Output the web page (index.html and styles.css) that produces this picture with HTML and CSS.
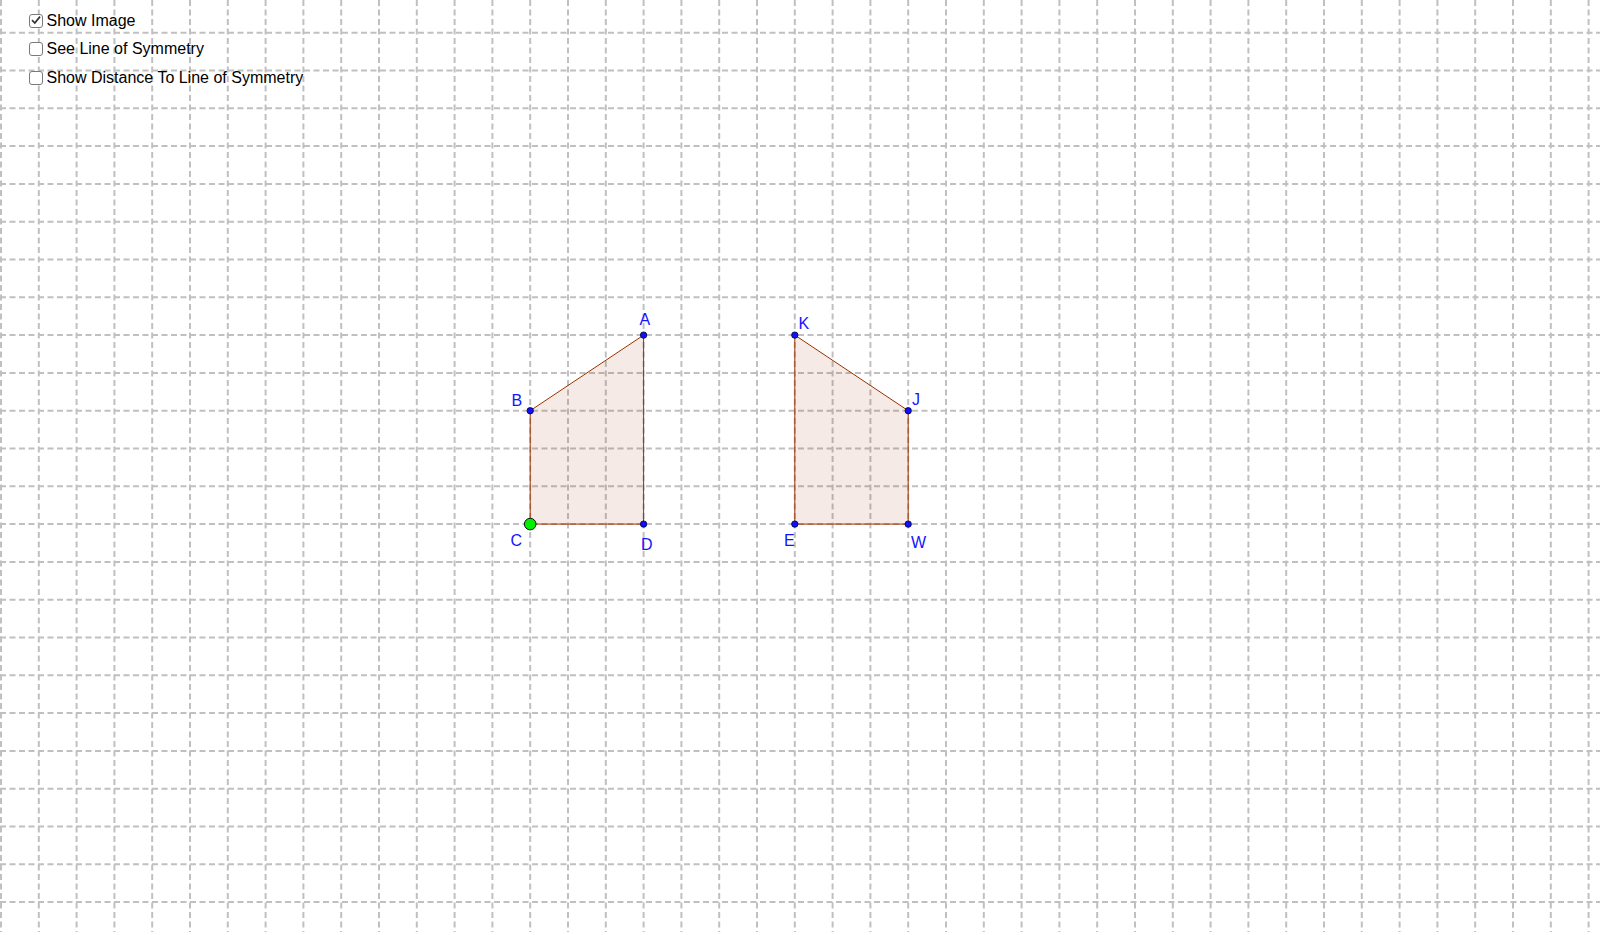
FILE: index.html
```html
<!DOCTYPE html>
<html lang="en">
<head>
<meta charset="utf-8">
<title>Line of Symmetry</title>
<link rel="stylesheet" href="styles.css">
</head>
<body>
<div class="stage">
  <svg class="canvas" width="1600" height="932" viewBox="0 0 1600 932" xmlns="http://www.w3.org/2000/svg">
    <g class="grid">
      <line x1="1" y1="0" x2="1" y2="932"/>
      <line x1="38.8" y1="0" x2="38.8" y2="932"/>
      <line x1="76.6" y1="0" x2="76.6" y2="932"/>
      <line x1="114.4" y1="0" x2="114.4" y2="932"/>
      <line x1="152.2" y1="0" x2="152.2" y2="932"/>
      <line x1="190" y1="0" x2="190" y2="932"/>
      <line x1="227.8" y1="0" x2="227.8" y2="932"/>
      <line x1="265.6" y1="0" x2="265.6" y2="932"/>
      <line x1="303.4" y1="0" x2="303.4" y2="932"/>
      <line x1="341.2" y1="0" x2="341.2" y2="932"/>
      <line x1="379" y1="0" x2="379" y2="932"/>
      <line x1="416.8" y1="0" x2="416.8" y2="932"/>
      <line x1="454.6" y1="0" x2="454.6" y2="932"/>
      <line x1="492.4" y1="0" x2="492.4" y2="932"/>
      <line x1="530.2" y1="0" x2="530.2" y2="932"/>
      <line x1="568" y1="0" x2="568" y2="932"/>
      <line x1="605.8" y1="0" x2="605.8" y2="932"/>
      <line x1="643.6" y1="0" x2="643.6" y2="932"/>
      <line x1="681.4" y1="0" x2="681.4" y2="932"/>
      <line x1="719.2" y1="0" x2="719.2" y2="932"/>
      <line x1="757" y1="0" x2="757" y2="932"/>
      <line x1="794.8" y1="0" x2="794.8" y2="932"/>
      <line x1="832.6" y1="0" x2="832.6" y2="932"/>
      <line x1="870.4" y1="0" x2="870.4" y2="932"/>
      <line x1="908.2" y1="0" x2="908.2" y2="932"/>
      <line x1="946" y1="0" x2="946" y2="932"/>
      <line x1="983.8" y1="0" x2="983.8" y2="932"/>
      <line x1="1021.6" y1="0" x2="1021.6" y2="932"/>
      <line x1="1059.4" y1="0" x2="1059.4" y2="932"/>
      <line x1="1097.2" y1="0" x2="1097.2" y2="932"/>
      <line x1="1135" y1="0" x2="1135" y2="932"/>
      <line x1="1172.8" y1="0" x2="1172.8" y2="932"/>
      <line x1="1210.6" y1="0" x2="1210.6" y2="932"/>
      <line x1="1248.4" y1="0" x2="1248.4" y2="932"/>
      <line x1="1286.2" y1="0" x2="1286.2" y2="932"/>
      <line x1="1324" y1="0" x2="1324" y2="932"/>
      <line x1="1361.8" y1="0" x2="1361.8" y2="932"/>
      <line x1="1399.6" y1="0" x2="1399.6" y2="932"/>
      <line x1="1437.4" y1="0" x2="1437.4" y2="932"/>
      <line x1="1475.2" y1="0" x2="1475.2" y2="932"/>
      <line x1="1513" y1="0" x2="1513" y2="932"/>
      <line x1="1550.8" y1="0" x2="1550.8" y2="932"/>
      <line x1="1588.6" y1="0" x2="1588.6" y2="932"/>
      <line x1="0" y1="32.7" x2="1600" y2="32.7"/>
      <line x1="0" y1="70.5" x2="1600" y2="70.5"/>
      <line x1="0" y1="108.3" x2="1600" y2="108.3"/>
      <line x1="0" y1="146.1" x2="1600" y2="146.1"/>
      <line x1="0" y1="183.9" x2="1600" y2="183.9"/>
      <line x1="0" y1="221.7" x2="1600" y2="221.7"/>
      <line x1="0" y1="259.5" x2="1600" y2="259.5"/>
      <line x1="0" y1="297.3" x2="1600" y2="297.3"/>
      <line x1="0" y1="335.1" x2="1600" y2="335.1"/>
      <line x1="0" y1="372.9" x2="1600" y2="372.9"/>
      <line x1="0" y1="410.7" x2="1600" y2="410.7"/>
      <line x1="0" y1="448.5" x2="1600" y2="448.5"/>
      <line x1="0" y1="486.3" x2="1600" y2="486.3"/>
      <line x1="0" y1="524.1" x2="1600" y2="524.1"/>
      <line x1="0" y1="561.9" x2="1600" y2="561.9"/>
      <line x1="0" y1="599.7" x2="1600" y2="599.7"/>
      <line x1="0" y1="637.5" x2="1600" y2="637.5"/>
      <line x1="0" y1="675.3" x2="1600" y2="675.3"/>
      <line x1="0" y1="713.1" x2="1600" y2="713.1"/>
      <line x1="0" y1="750.9" x2="1600" y2="750.9"/>
      <line x1="0" y1="788.7" x2="1600" y2="788.7"/>
      <line x1="0" y1="826.5" x2="1600" y2="826.5"/>
      <line x1="0" y1="864.3" x2="1600" y2="864.3"/>
      <line x1="0" y1="902.1" x2="1600" y2="902.1"/>
    </g>
    <g class="shapes">
      <polygon class="poly" points="643.6,335.1 530.2,410.7 530.2,524.1 643.6,524.1"/>
      <polygon class="poly" points="794.8,335.1 908.2,410.7 908.2,524.1 794.8,524.1"/>
    </g>
    <g class="points">
      <circle class="pt" cx="643.6" cy="335.1" r="3.2"/>
      <circle class="pt" cx="530.2" cy="410.7" r="3.2"/>
      <circle class="pt" cx="643.6" cy="524.1" r="3.2"/>
      <circle class="pt" cx="794.8" cy="335.1" r="3.2"/>
      <circle class="pt" cx="908.2" cy="410.7" r="3.2"/>
      <circle class="pt" cx="794.8" cy="524.1" r="3.2"/>
      <circle class="pt" cx="908.2" cy="524.1" r="3.2"/>
      <circle class="pt-free" cx="530.2" cy="524.1" r="5.8"/>
    </g>
    <g class="labels">
      <text x="639.5" y="325">A</text>
      <text x="511.5" y="406">B</text>
      <text x="510.5" y="546">C</text>
      <text x="641" y="550">D</text>
      <text x="798.5" y="329">K</text>
      <text x="912" y="405">J</text>
      <text x="784" y="546">E</text>
      <text x="911" y="548">W</text>
    </g>
  </svg>

  <div class="panel">
    <label class="row">
      <span class="box checked">
        <svg class="tick" viewBox="0 0 14 14" width="14" height="14"><path d="M3 7.2 L5.8 10 L11 3.6"/></svg>
      </span>
      <span class="caption">Show Image</span>
    </label>
    <label class="row">
      <span class="box"></span>
      <span class="caption">See Line of Symmetry</span>
    </label>
    <label class="row row-lower">
      <span class="box"></span>
      <span class="caption">Show Distance To Line of Symmetry</span>
    </label>
  </div>
</div>
</body>
</html>
```

FILE: styles.css
```css
html, body {
  margin: 0;
  padding: 0;
  background: #ffffff;
}

.stage {
  position: relative;
  width: 1600px;
  height: 935px;
  overflow: hidden;
  background: #ffffff;
  font-family: "Liberation Sans", Arial, sans-serif;
}

.canvas {
  display: block;
}

.grid line {
  stroke: #c0c0c0;
  stroke-width: 2;
  stroke-dasharray: 6 3.5;
}

.poly {
  fill: rgba(153, 51, 0, 0.1);
  stroke: #993300;
  stroke-width: 1;
  stroke-linejoin: round;
}

.pt {
  fill: #1010ff;
  stroke: #000033;
  stroke-width: 0.8;
}

.pt-free {
  fill: #00ee00;
  stroke: #111111;
  stroke-width: 1;
}

.labels text {
  font-family: "Liberation Sans", Arial, sans-serif;
  font-size: 16px;
  fill: #1414ff;
}

.panel {
  position: absolute;
  left: 29px;
  top: 13.5px;
  display: flex;
  flex-direction: column;
  gap: 14px;
}

.row {
  display: flex;
  align-items: center;
  height: 14px;
  cursor: pointer;
}

.row-lower {
  margin-top: 1.5px;
}

.box {
  box-sizing: border-box;
  width: 14px;
  height: 14px;
  border: 1.3px solid #7a7a7a;
  border-radius: 3px;
  background: #ffffff;
  flex: none;
  display: block;
  position: relative;
}

.tick {
  position: absolute;
  left: -1.3px;
  top: -1.3px;
  fill: none;
  stroke: #333333;
  stroke-width: 1.7;
}

.caption {
  margin-left: 3.5px;
  font-size: 16px;
  line-height: 16px;
  color: #000000;
  white-space: nowrap;
}
```
